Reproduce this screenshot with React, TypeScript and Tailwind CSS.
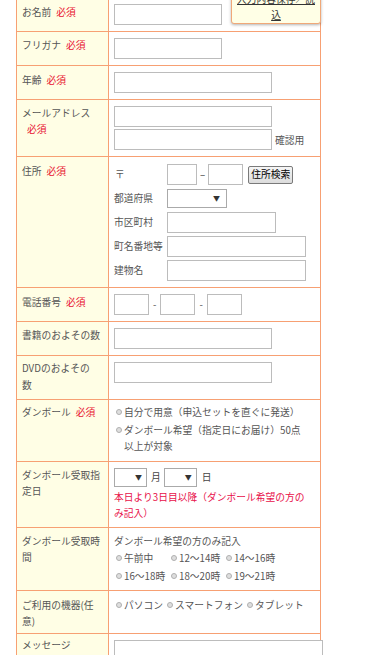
import React from "react";

const BORDER = "border-[#f7a073]";

function Req() {
  return <span className="ml-[5px] text-[#e8102f]">必須</span>;
}

function Radio() {
  return (
    <span className="mr-[2px] inline-block h-[6px] w-[6px] shrink-0 rounded-full border border-[#b0b0b0] bg-[#dedede] align-middle" />
  );
}

function Select({ wide }: { wide?: boolean }) {
  return (
    <div
      className={`flex h-[19px] items-center justify-end border border-[#aaaaaa] bg-white ${
        wide ? "w-[60px] pr-[6px]" : "w-[33px] pr-[4px]"
      }`}
    >
      <span className="text-[7px] leading-none text-[#333]">▼</span>
    </div>
  );
}

function Row({
  h,
  label,
  lpt,
  children,
}: {
  h: string;
  label: React.ReactNode;
  lpt: string;
  children: React.ReactNode;
}) {
  return (
    <div className={`flex border-b ${BORDER} ${h}`}>
      <div className={`w-[92px] shrink-0 border-r ${BORDER} bg-[#fffee5] pl-[5px] pr-[2px] leading-[16px] ${lpt}`}>
        {label}
      </div>
      <div className="min-w-0 flex-1 pl-[5px]">{children}</div>
    </div>
  );
}

const inp = "block h-[21px] border border-[#bcbcbc] bg-white";

export default function App() {
  return (
    <div className="relative h-[655px] overflow-hidden bg-white font-['Noto_Sans_CJK_JP',sans-serif] text-[9.75px] text-[#555]">
      <div className={`ml-[16px] mt-[-3px] w-[305px] border-x border-t ${BORDER}`}>
        <Row h="h-[34px]" lpt="pt-[6px]" label={<>お名前<Req /></>}>
          <div className="pt-[6px]">
            <input className={`${inp} w-[108px]`} />
          </div>
        </Row>
        <Row h="h-[34px]" lpt="pt-[5px]" label={<>フリガナ<Req /></>}>
          <div className="pt-[6px]">
            <input className={`${inp} w-[108px]`} />
          </div>
        </Row>
        <Row h="h-[34px]" lpt="pt-[6px]" label={<>年齢<Req /></>}>
          <div className="pt-[6px]">
            <input className={`${inp} w-[158px]`} />
          </div>
        </Row>
        <Row
          h="h-[57px]"
          lpt="pt-[5px]"
          label={
            <>
              メールアドレス
              <br />
              <Req />
            </>
          }
        >
          <div className="flex flex-col gap-[2px] pt-[6px]">
            <input className={`${inp} w-[158px]`} />
            <div className="flex items-center">
              <input className={`${inp} w-[158px]`} />
              <span className="ml-[3px] leading-[16px]">確認用</span>
            </div>
          </div>
        </Row>
        <Row h="h-[131px]" lpt="pt-[6px]" label={<>住所<Req /></>}>
          <div className="flex flex-col gap-[3px] pt-[7px]">
            <div className="flex h-[21px] items-center">
              <span className="w-[53px] shrink-0 pl-[1px]">〒</span>
              <input className={`${inp} w-[30px]`} />
              <span className="mx-[3px] text-[#333]">–</span>
              <input className={`${inp} w-[35px]`} />
              <button className="ml-[5px] h-[18px] rounded-[2px] border border-[#7a7a7a] bg-gradient-to-b from-[#f6f6f6] to-[#dcdcdc] px-[2px] text-[9.75px] leading-none text-black">
                住所検索
              </button>
            </div>
            <div className="flex h-[21px] items-center">
              <span className="w-[53px] shrink-0">都道府県</span>
              <Select wide />
            </div>
            <div className="flex h-[21px] items-center">
              <span className="w-[53px] shrink-0">市区町村</span>
              <input className={`${inp} w-[109px]`} />
            </div>
            <div className="flex h-[21px] items-center">
              <span className="w-[53px] shrink-0">町名番地等</span>
              <input className={`${inp} w-[139px]`} />
            </div>
            <div className="flex h-[21px] items-center">
              <span className="w-[53px] shrink-0">建物名</span>
              <input className={`${inp} w-[139px]`} />
            </div>
          </div>
        </Row>
        <Row h="h-[34px]" lpt="pt-[6px]" label={<>電話番号<Req /></>}>
          <div className="flex items-center pt-[6px]">
            <input className={`${inp} w-[35px]`} />
            <span className="mx-[4px]">-</span>
            <input className={`${inp} w-[35px]`} />
            <span className="mx-[4px]">-</span>
            <input className={`${inp} w-[35px]`} />
          </div>
        </Row>
        <Row h="h-[34px]" lpt="pt-[5px]" label="書籍のおよその数">
          <div className="pt-[6px]">
            <input className={`${inp} w-[158px]`} />
          </div>
        </Row>
        <Row
          h="h-[44px]"
          lpt="pt-[4px] leading-[17px]"
          label={
            <>
              DVDのおよその
              <br />数
            </>
          }
        >
          <div className="pt-[6px]">
            <input className={`${inp} w-[158px]`} />
          </div>
        </Row>
        <Row h="h-[62px]" lpt="pt-[4px]" label={<>ダンボール<Req /></>}>
          <div className="flex flex-col gap-[2px] pt-[4px] leading-[16px]">
            <div className="flex items-start pl-[2px]">
              <span className="mt-[5px] flex">
                <Radio />
              </span>
              <span>自分で用意（申込セットを直ぐに発送）</span>
            </div>
            <div className="flex items-start pl-[2px]">
              <span className="mt-[5px] flex">
                <Radio />
              </span>
              <span className="max-w-[182px]">ダンボール希望（指定日にお届け）50点以上が対象</span>
            </div>
          </div>
        </Row>
        <Row
          h="h-[66px]"
          lpt="pt-[5px]"
          label={
            <>
              ダンボール受取指
              <br />
              定日
            </>
          }
        >
          <div className="pt-[6px]">
            <div className="flex items-center">
              <Select />
              <span className="ml-[4px] mr-[3px] text-[#444]">月</span>
              <Select />
              <span className="ml-[5px] text-[#444]">日</span>
            </div>
            <div className="mt-[2px] pr-[8px] leading-[16px] text-[#e8104a]">
              本日より3日目以降（ダンボール希望の方のみ記入）
            </div>
          </div>
        </Row>
        <Row
          h="h-[63px]"
          lpt="pt-[5px]"
          label={
            <>
              ダンボール受取時
              <br />間
            </>
          }
        >
          <div className="pt-[5px]">
            <div className="leading-[16px]">ダンボール希望の方のみ記入</div>
            <div className="grid grid-cols-[55px_55px_auto] leading-[18px]">
              <div className="flex items-center pl-[2px]">
                <Radio />
                午前中
              </div>
              <div className="flex items-center pl-[2px]">
                <Radio />
                12～14時
              </div>
              <div className="flex items-center pl-[2px]">
                <Radio />
                14～16時
              </div>
              <div className="flex items-center pl-[2px]">
                <Radio />
                16～18時
              </div>
              <div className="flex items-center pl-[2px]">
                <Radio />
                18～20時
              </div>
              <div className="flex items-center pl-[2px]">
                <Radio />
                19～21時
              </div>
            </div>
          </div>
        </Row>
        <Row
          h="h-[43px]"
          lpt="pt-[6px] leading-[15px]"
          label={
            <>
              ご利用の機器(任
              <br />
              意)
            </>
          }
        >
          <div className="flex items-center gap-[4px] pl-[2px] pt-[6px] leading-[16px]">
            <span className="flex items-center">
              <Radio />
              パソコン
            </span>
            <span className="flex items-center">
              <Radio />
              スマートフォン
            </span>
            <span className="flex items-center">
              <Radio />
              タブレット
            </span>
          </div>
        </Row>
        <Row h="h-[100px]" lpt="pt-[3px]" label="メッセージ">
          <div className="pt-[6px]">
            <textarea className="block h-[70px] w-[209px] resize-none border border-[#bcbcbc] bg-white" />
          </div>
        </Row>
      </div>

      <div className="absolute left-[231px] top-[-12px] w-[90px] rounded-[3px] border border-[#f0a878] bg-[#ffffe6] px-[4px] pt-[2px] text-center leading-[16px] text-[#333] shadow-[0_1px_3px_rgba(0,0,0,0.3)]">
        <a className="underline">入力内容保存／読込</a>
      </div>
    </div>
  );
}
